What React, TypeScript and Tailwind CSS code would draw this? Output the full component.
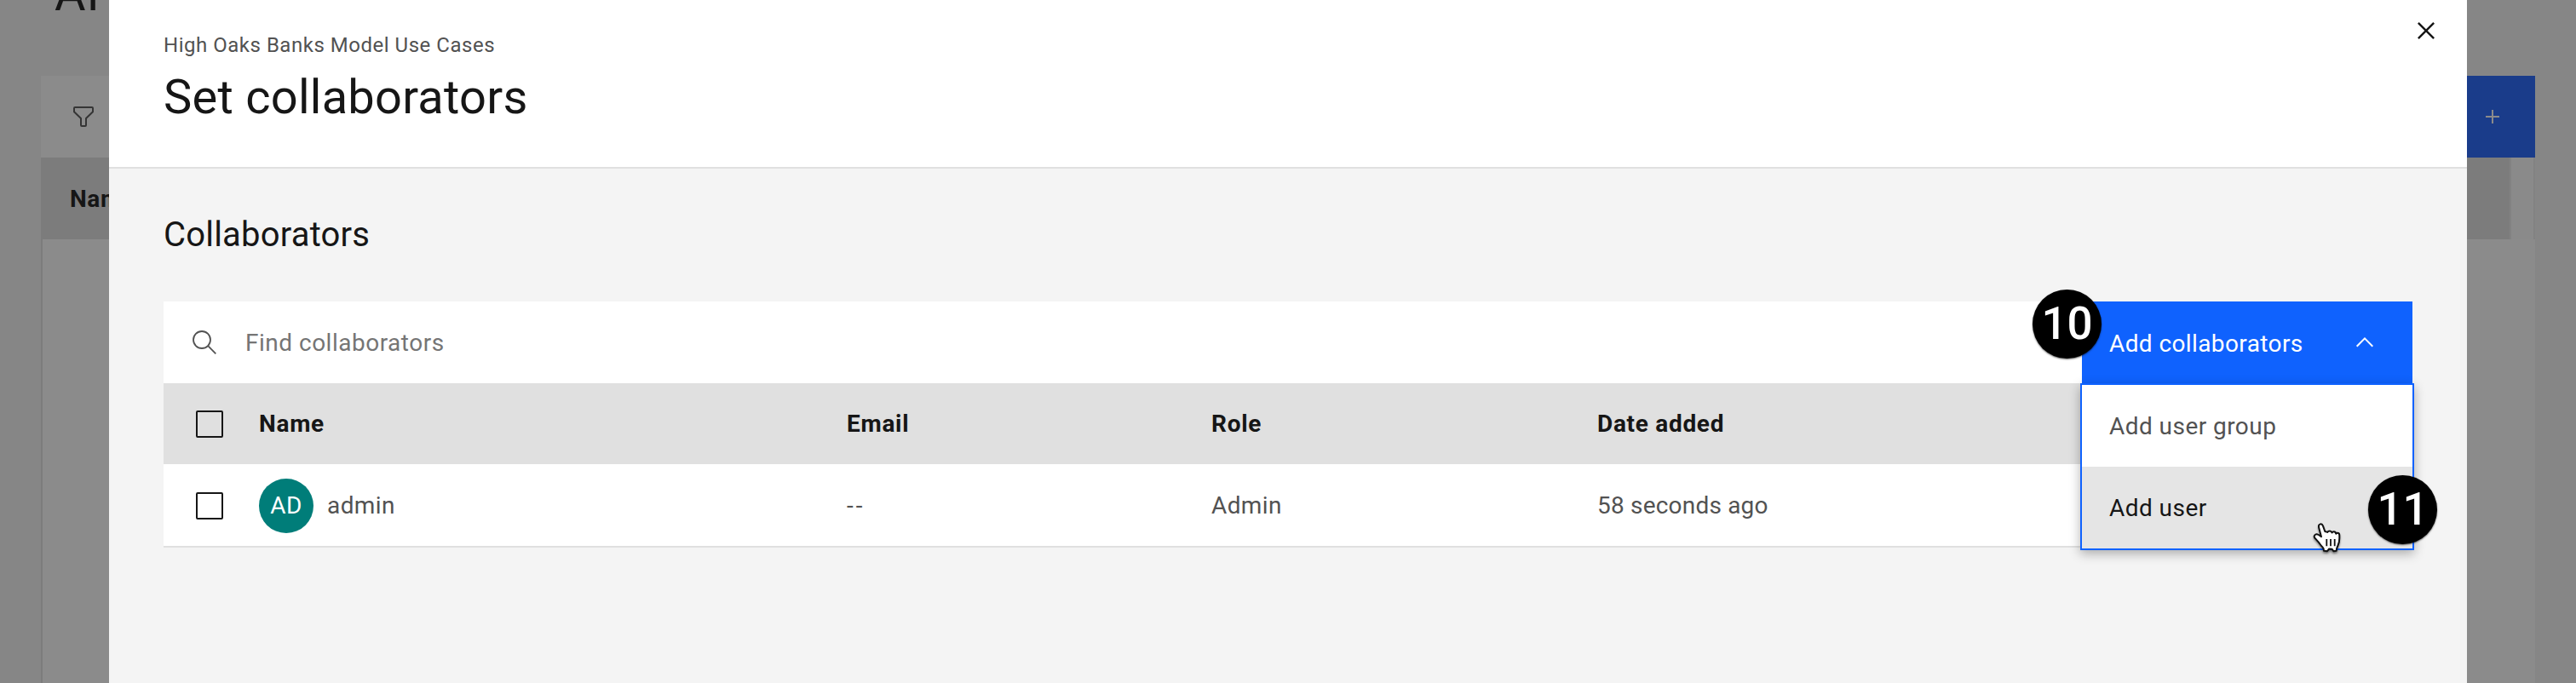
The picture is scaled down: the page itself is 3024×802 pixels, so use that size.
import React from "react";

const columns = ["Name", "Email", "Role", "Date added"];

function Checkbox() {
  return <span className="block h-8 w-8 shrink-0 rounded-[2px] border-2 border-[#161616]" />;
}

function FilterIcon() {
  return (
    <svg className="h-8 w-8" viewBox="0 0 32 32" fill="none" stroke="#353535" strokeWidth="2" strokeLinejoin="round">
      <path d="M6 5h20a1 1 0 0 1 1 1v4.200L19 18v8a1 1 0 0 1-1 1h-4a1 1 0 0 1-1-1v-8L5 10.200V6a1 1 0 0 1 1-1z" />
    </svg>
  );
}

function SearchIcon() {
  return (
    <svg className="h-8 w-8" viewBox="0 0 32 32" fill="none" stroke="#525252" strokeWidth="1.800">
      <circle cx="13" cy="13" r="10" />
      <path d="M20.200 20.200L29.300 29.300" />
    </svg>
  );
}

function CloseIcon() {
  return (
    <svg className="h-10 w-10" viewBox="0 0 32 32" fill="#161616">
      <path d="M24 9.400L22.600 8 16 14.600 9.400 8 8 9.400l6.600 6.600L8 22.600 9.400 24l6.600-6.600 6.600 6.600 1.400-1.400-6.600-6.600z" />
    </svg>
  );
}

function HandCursor() {
  return (
    <svg className="h-[38px] w-[36px] drop-shadow-[0_2px_1px_rgba(0,0,0,0.4)]" viewBox="0 0 36 38" fill="none">
      <path
        d="M10 2.400C8 2.900 7.600 4.600 8.200 6.800L11 17.200 7.800 15C6 13.900 4.200 14.200 3.200 15.500c-.9 1.200-.4 2.700.6 3.700l4.400 5c1.400 1.800 2.400 3.600 4.300 5.300 1 1 1.500 2.300 1.500 4.300l4 .4 2.200-2.700 3.300.2 2 2.600 3.200-.5c0-2.600.8-4.200 1.900-6.500 1.200-2.600 1.700-5.200 1.700-8.300v-3.500c0-1.600-.9-2.700-2.200-2.700-.8 0-1.400.3-1.800.9-.3-1.500-1.200-2.500-2.600-2.500-1 0-1.800.5-2.200 1.200-.5-1.300-1.500-2.100-2.800-2-1.200 0-2 .6-2.500 1.500L15.300 11 13 4.700C12.400 3 11.500 2.100 10 2.400z"
        fill="#fff"
        stroke="#111"
        strokeWidth="2"
        strokeLinejoin="round"
      />
      <path d="M17.300 20v8.200M22 20v8.200M26.700 20v8.200" stroke="#111" strokeWidth="1.800" />
    </svg>
  );
}

function StepBadge({ value, place }: { value: string; place: string }) {
  return (
    <div
      className={
        "absolute z-20 flex h-[81px] w-[81px] items-center justify-center rounded-full bg-black text-[53px] font-medium leading-none tracking-normal text-white shadow-[0_1px_2px_rgba(0,0,0,0.6)] " +
        place
      }
    >
      {value}
    </div>
  );
}

function Backdrop() {
  return (
    <div className="absolute inset-0 flex flex-col bg-[#868686] px-12 text-[#161616]">
      <div className="h-[89px] shrink-0">
        <h1 className="-mt-[43px] pl-4 text-[56px] leading-[72px] tracking-[1px]">AI</h1>
      </div>
      <div className="flex h-24 shrink-0 items-center justify-between bg-[#8b8b8b]">
        <div className="pl-[34px]">
          <FilterIcon />
        </div>
        <div className="flex h-full w-[200px] items-center justify-end bg-[#1a3c8a] pr-[34px]">
          <svg className="h-8 w-8" viewBox="0 0 32 32" fill="#8b8b8b">
            <path d="M17 15V8h-2v7H8v2h7v7h2v-7h7v-2z" />
          </svg>
        </div>
      </div>
      <div className="flex h-24 shrink-0">
        <div className="flex flex-1 items-center bg-[#7c7c7c] pl-[34px] pt-[2px] text-[28px] font-bold tracking-[0.6px]">
          Name
        </div>
        <div className="w-[30px] border-x-2 border-[#828282] bg-[#8a8a8a]" />
      </div>
      <div className="flex-1 border-l-2 border-[#7c7c7c] bg-[#8b8b8b]" />
    </div>
  );
}

function AddMenu() {
  return (
    <div className="relative h-24 w-[388px]">
      <button className="flex h-24 w-full items-center justify-between bg-[#0f62fe] pl-8 pr-10 text-[28px] tracking-[0.4px] text-white">
        <span className="pt-[3px]">Add collaborators</span>
        <svg className="h-8 w-8" viewBox="0 0 32 32" fill="none" stroke="#fff" strokeWidth="2">
          <path d="M6.700 20.700L16 11.400l9.300 9.300" />
        </svg>
      </button>
      <ul className="absolute -left-[2px] top-24 z-10 w-[392px] border-2 border-[#0f62fe] bg-white text-[28px] tracking-[0.45px] text-[#525252] shadow-[0_4px_12px_rgba(0,0,0,0.3)]">
        <li className="flex h-24 items-center px-8 pt-[2px]">Add user group</li>
        <li className="flex h-24 items-center bg-[#e5e5e5] px-8 pt-[2px] text-[#161616]">Add user</li>
      </ul>
      <StepBadge value="10" place="-left-[58px] -top-[14px]" />
      <StepBadge value="11" place="left-[336px] top-[204px]" />
      <div className="absolute left-[270px] top-[259px] z-20">
        <HandCursor />
      </div>
    </div>
  );
}

export default function App() {
  return (
    <div className="relative h-[802px] w-[3024px] overflow-hidden px-32 font-[Roboto,'Noto_Sans',sans-serif]">
      <Backdrop />
      <section className="relative flex h-full flex-col bg-[#f4f4f4] text-[#161616]">
        <header className="flex h-[198px] shrink-0 justify-between border-b-2 border-[#e0e0e0] bg-white pl-16 pr-7">
          <div className="pt-[37px]">
            <p className="text-[24px] leading-8 tracking-[0.52px] text-[#525252]">High Oaks Banks Model Use Cases</p>
            <h2 className="mt-[9px] text-[56px] leading-[72px] tracking-[0.25px]">Set collaborators</h2>
          </div>
          <button className="mt-4 h-10 w-10">
            <CloseIcon />
          </button>
        </header>
        <main className="px-16 pt-[52px]">
          <h3 className="text-[40px] leading-[52px] tracking-[0.2px]">Collaborators</h3>
          <div className="mt-[52px] flex h-24 bg-white">
            <div className="flex flex-1 items-center gap-8 pl-8">
              <SearchIcon />
              <span className="pt-[2px] text-[28px] tracking-[0.5px] text-[#757575]">Find collaborators</span>
            </div>
            <AddMenu />
          </div>
          <div className="grid h-[95px] grid-cols-[112px_690px_428px_453px_1fr] items-center bg-[#e0e0e0] text-[28px] font-bold tracking-[0.7px]">
            <div className="pl-[38px]">
              <Checkbox />
            </div>
            {columns.map((column) => (
              <div key={column}>{column}</div>
            ))}
          </div>
          <div className="grid h-[98px] grid-cols-[112px_690px_428px_453px_1fr] items-center border-b-2 border-[#e0e0e0] bg-white pt-[2px] text-[28px] tracking-[0.4px] text-[#525252]">
            <div className="pl-[38px]">
              <Checkbox />
            </div>
            <div className="flex items-center gap-4">
              <span className="flex h-16 w-16 items-center justify-center rounded-full bg-[#007d79] text-white">AD</span>
              <span>admin</span>
            </div>
            <div className="tracking-[3px]">--</div>
            <div>Admin</div>
            <div className="tracking-[0.2px]">58 seconds ago</div>
          </div>
        </main>
      </section>
    </div>
  );
}
